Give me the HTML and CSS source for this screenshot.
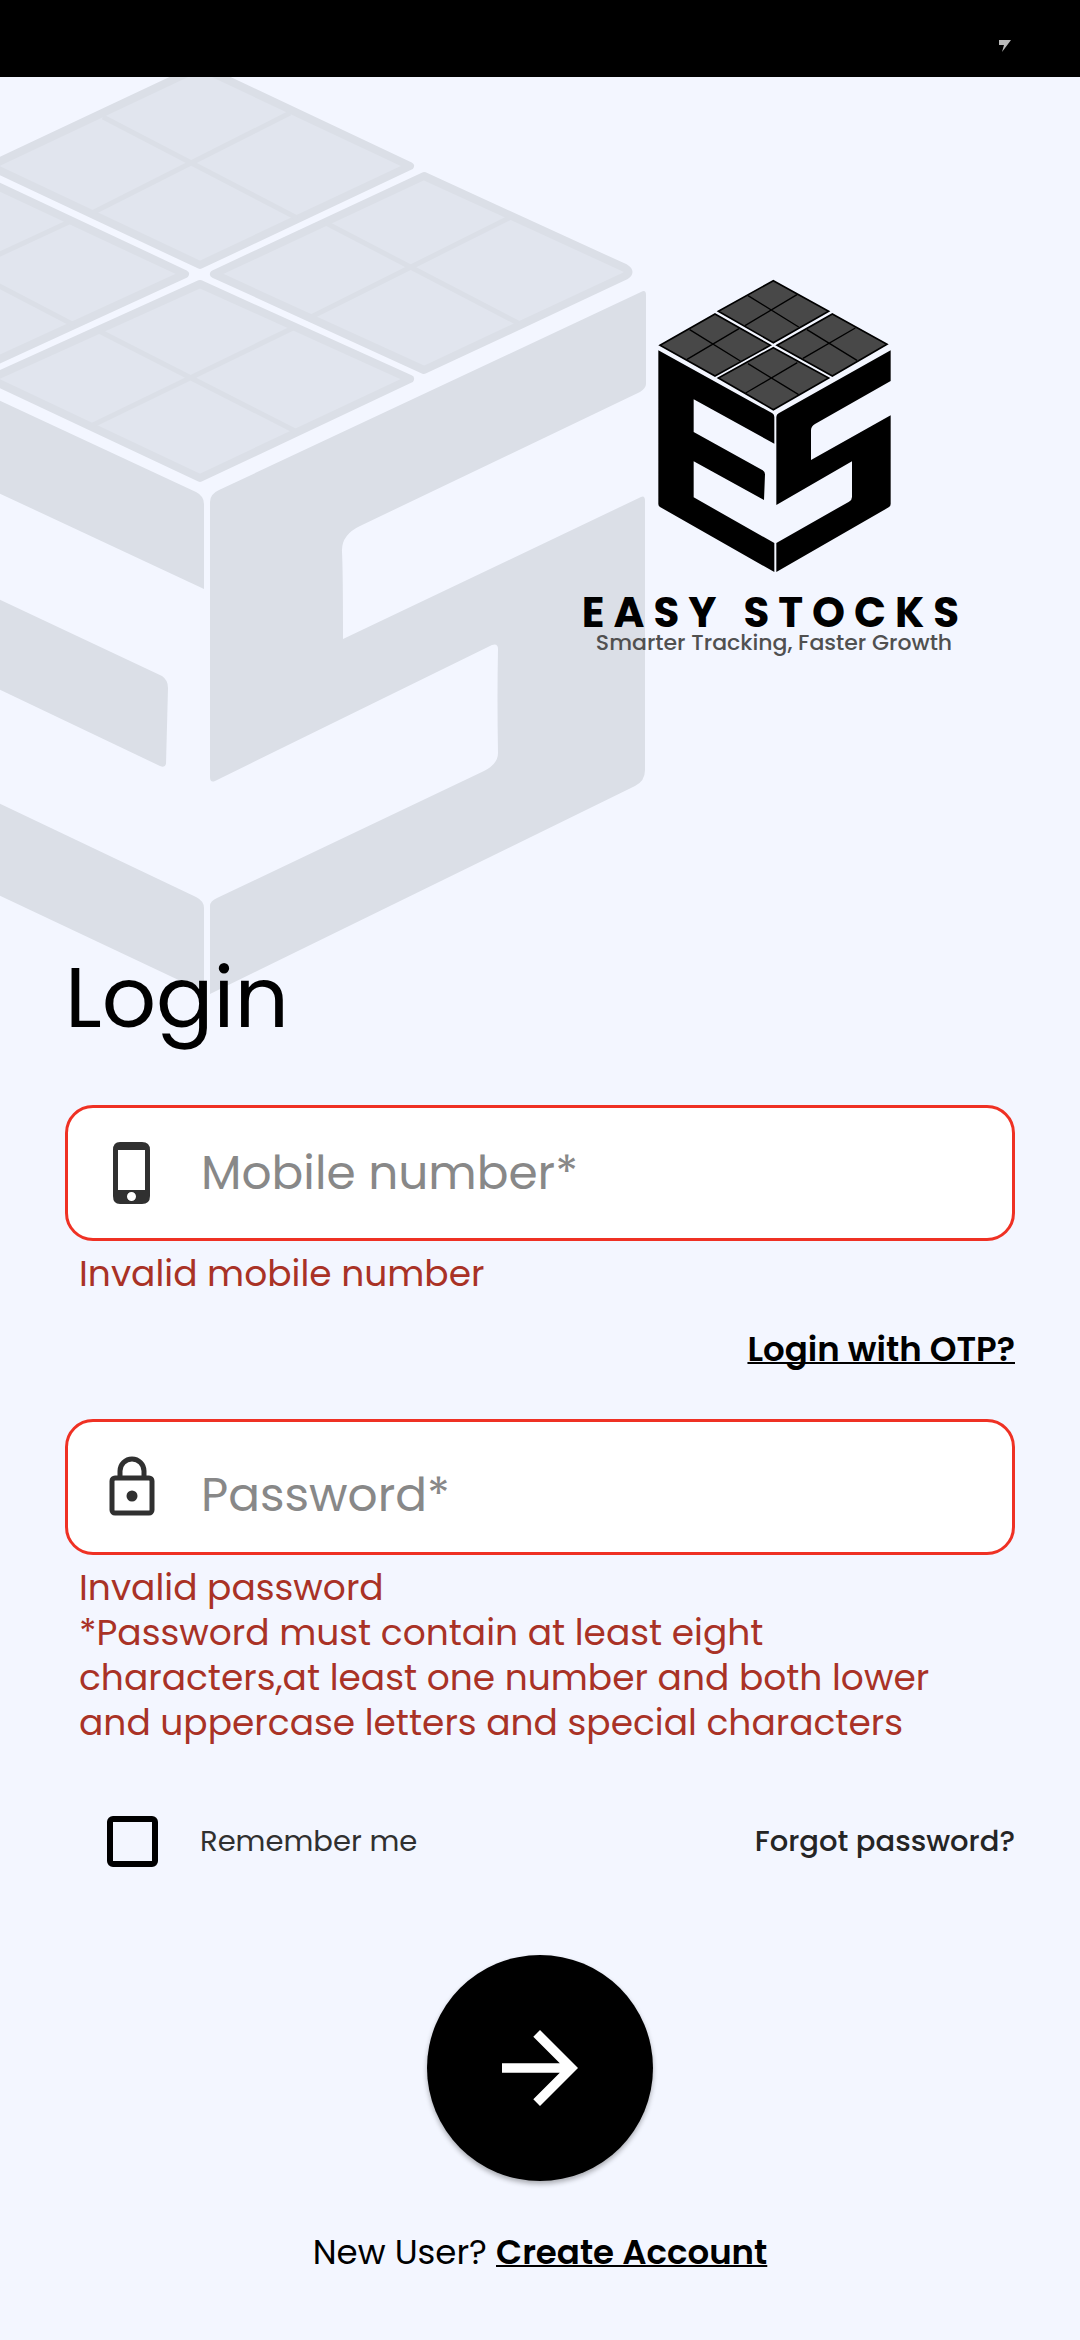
FILE: index.html
```html
<!DOCTYPE html>
<html lang="en">
<head>
<meta charset="utf-8">
<meta name="viewport" content="width=device-width, initial-scale=1">
<title>Easy Stocks – Login</title>
<link rel="stylesheet" href="styles.css">
</head>
<body>
<div class="status-bar">
  <svg class="status-icon" viewBox="0 0 12 12" aria-hidden="true"><path d="M0 0H12L3 12L5 5H0Z"/></svg>
</div>
<div class="screen">
  <svg class="watermark" viewBox="0 77 650 923" aria-hidden="true">
    <g class="wm-tile">
      <path d="M200 67L410 166L200 265L-10 166Z"/>
      <path d="M424 176L625 268Q632 272 625 276L424 370L214 274Z"/>
      <path d="M-24 176L185 274L-24 370L-233 274Z"/>
      <path d="M200 284L410 379L200 478L-10 379Z"/>
    </g>
    <path class="wm-lines" d="M103 117L297 218M290 113L92 213M99 331L297 432M295 327L93 425M324 222L518 323M511 217L311 317M-123 222L74 325M69 222L-136 317"/>
    <g class="wm-face">
      <path d="M-10 396L196 492Q204 496 204 504V589L-10 489Z"/>
      <path d="M-10 595L162 676Q168 680 168 688L166 764Q165 768 160 766L-10 685Z"/>
      <path d="M-10 799L196 897Q204 901 204 908V992L-10 891Z"/>
      <path d="M641 292Q646 289 646 295V384Q646 388 640 392L360 526Q341 535 342 552Q343 570 343 639L641 497Q645 495 645 501V770Q645 781 635 786L210 994V906Q210 901 217 898L484 771Q498 764 498 753Q497 697 498 649Q498 643 492 645L215 781Q210 783 210 777V502Q210 494 219 490Z"/>
    </g>
  </svg>

  <header class="brand">
    <svg class="brand-cube" viewBox="290 86 705 882" role="img" aria-label="Easy Stocks logo">
      <g class="cube-tile">
        <path d="M639 91L805 183L639 277L474 183Z"/>
        <path d="M464 191L630 285L464 377L299 285Z"/>
        <path d="M816 191L980 282L816 377L650 285Z"/>
        <path d="M639 292L805 383L639 478L474 383Z"/>
      </g>
      <path class="cube-lines" d="M563 136L715 230M710 133L554 226M388 238L540 332M536 235L380 327M740 238L890 330M885 233L728 324M563 340L715 433M711 337L556 428"/>
      <path d="M294 300L636 489Q642 493 642 500V580L400 447V545L607 660Q614 664 614 672L611 749L400 633V741L642 878V965L299 770Q294 767 294 761Z"/>
      <path d="M991 300V392L764 521Q752 528 752 540V629L991 495V761Q991 768 985 771L648 965V878L866 754Q875 749 875 740V633L648 764V500Q648 493 655 489Z"/>
    </svg>
    <div class="brand-name">EASY STOCKS</div>
    <div class="brand-tagline">Smarter Tracking, Faster Growth</div>
  </header>

  <main>
    <form class="login">
      <h1>Login</h1>

      <div class="field">
        <svg class="field-icon" viewBox="0 0 48 64" aria-hidden="true"><path fill-rule="evenodd" d="M12 1H34Q42 1 42 9V55Q42 63 34 63H12Q5 63 5 55V9Q5 1 12 1ZM10 9V49H37V9ZM23.500 51A4.500 4.500 0 1 0 23.500 60A4.500 4.500 0 1 0 23.500 51Z"/></svg>
        <input type="tel" placeholder="Mobile number*" aria-label="Mobile number" aria-describedby="mobile-error">
      </div>
      <p class="error" id="mobile-error">Invalid mobile number</p>
      <a class="link otp" href="#otp">Login with OTP?</a>

      <div class="field field-password">
        <svg class="field-icon" viewBox="0 0 48 64" aria-hidden="true"><rect class="lock-line" x="4" y="23" width="40" height="35" rx="3"/><path class="lock-line" d="M12 23V16A12 12 0 0 1 36 16V23"/><circle cx="24" cy="41" r="5.500"/></svg>
        <input type="password" placeholder="Password*" aria-label="Password" aria-describedby="password-error">
      </div>
      <p class="error" id="password-error">Invalid password<br>*Password must contain at least eight<br>characters,at least one number and both lower<br>and uppercase letters and special characters</p>

      <div class="options">
        <label class="remember"><input type="checkbox"><span>Remember me</span></label>
        <a class="forgot" href="#forgot">Forgot password?</a>
      </div>

      <button class="submit" type="submit" aria-label="Log in">
        <svg viewBox="4 4 16 16" aria-hidden="true"><path d="M12 4l-1.410 1.410L16.170 11H4v2h12.170l-5.580 5.590L12 20l8-8z"/></svg>
      </button>
    </form>
    <p class="signup">New User? <a class="link" href="#signup">Create Account</a></p>
  </main>
</div>
</body>
</html>
```

FILE: styles.css
```css
* {
  box-sizing: border-box;
}

body {
  margin: 0;
  min-height: 100vh;
  display: flex;
  flex-direction: column;
  background: #f3f6ff;
  color: #000;
  font-family: Poppins, Inter, "Noto Sans", sans-serif;
}

.status-bar {
  height: 77px;
  padding: 40px 69px 0;
  display: flex;
  justify-content: flex-end;
  background: #000;
}

.status-icon {
  width: 12px;
  height: 12px;
  fill: #bbb;
}

.screen {
  position: relative;
  flex: 1;
  overflow: hidden;
}

/* Oversized logo bleeding off the top-left corner, behind the content */
.watermark {
  position: absolute;
  top: 0;
  left: 0;
  width: 650px;
  height: 923px;
}

.wm-tile {
  fill: #e1e5ee;
  stroke: #dbdfe7;
  stroke-width: 8px;
  stroke-linejoin: round;
}

.wm-lines {
  fill: none;
  stroke: #dbdfe7;
  stroke-width: 5px;
}

.wm-face {
  fill: #dbdfe7;
}

.brand {
  position: relative;
  width: 400px;
  margin-left: auto;
  margin-right: 106px;
  padding-top: 202px;
  display: flex;
  flex-direction: column;
  align-items: center;
}

.brand-cube {
  width: 235px;
  height: 294px;
}

.cube-tile {
  fill: #484848;
  stroke: #000;
  stroke-width: 5px;
}

.cube-lines {
  fill: none;
  stroke: #000;
  stroke-width: 4px;
}

.brand-name {
  margin-top: 19px;
  padding-left: 2px;
  font-size: 42px;
  line-height: 42px;
  font-weight: 700;
  letter-spacing: 9px;
  white-space: nowrap;
}

.brand-tagline {
  color: #505050;
  font-size: 22px;
  line-height: 18px;
  font-weight: 500;
  white-space: nowrap;
}

main {
  position: relative;
  padding: 296px 65px 40px;
}

.login {
  display: flex;
  flex-direction: column;
}

h1 {
  margin: 0 0 57px;
  font-size: 85px;
  line-height: 100px;
  font-weight: 400;
}

.field {
  height: 136px;
  padding: 0 40px;
  display: flex;
  align-items: center;
  gap: 45px;
  background: #fff;
  border: 3px solid #ef3124;
  border-radius: 28px;
}

.field-icon {
  width: 48px;
  height: 64px;
  flex: none;
  fill: #303030;
}

.lock-line {
  fill: none;
  stroke: #303030;
  stroke-width: 5px;
}

.field input {
  flex: 1;
  min-width: 0;
  height: 100%;
  padding: 0;
  border: 0;
  outline: 0;
  background: none;
  color: #000;
  font-family: inherit;
  font-size: 47px;
}

.field input::placeholder {
  color: #888;
  opacity: 1;
}

.field-password input {
  padding-top: 16px;
}

.error {
  margin: 10px 0 0 14px;
  color: #a93226;
  font-size: 36px;
  line-height: 45px;
}

.link {
  color: #000;
  font-weight: 600;
  text-underline-offset: 1px;
  text-decoration-thickness: 2px;
  text-decoration-skip-ink: none;
}

.otp {
  align-self: flex-end;
  margin: 31px 0 47px;
  font-size: 34px;
  line-height: 45px;
}

.options {
  margin-top: 71px;
  padding-left: 42px;
  display: flex;
  align-items: center;
  justify-content: space-between;
  font-size: 29px;
  line-height: 51px;
  color: #303030;
}

.remember {
  display: flex;
  align-items: center;
  gap: 42px;
}

.remember input {
  appearance: none;
  width: 51px;
  height: 51px;
  margin: 0;
  border: 6px solid #000;
  border-radius: 6px;
}

.remember input:checked {
  background: #000;
}

.forgot {
  color: #252525;
  font-weight: 500;
  text-decoration: none;
}

.submit {
  width: 226px;
  height: 226px;
  margin: 88px auto 0;
  padding: 0;
  display: grid;
  place-items: center;
  border: 0;
  border-radius: 50%;
  background: #000;
  box-shadow: 0 3px 5px rgba(0, 0, 0, 0.3);
}

.submit svg {
  width: 76px;
  height: 76px;
  fill: #fff;
}

.signup {
  margin: 49px 0 0;
  font-size: 34px;
  line-height: 45px;
  text-align: center;
}
```
